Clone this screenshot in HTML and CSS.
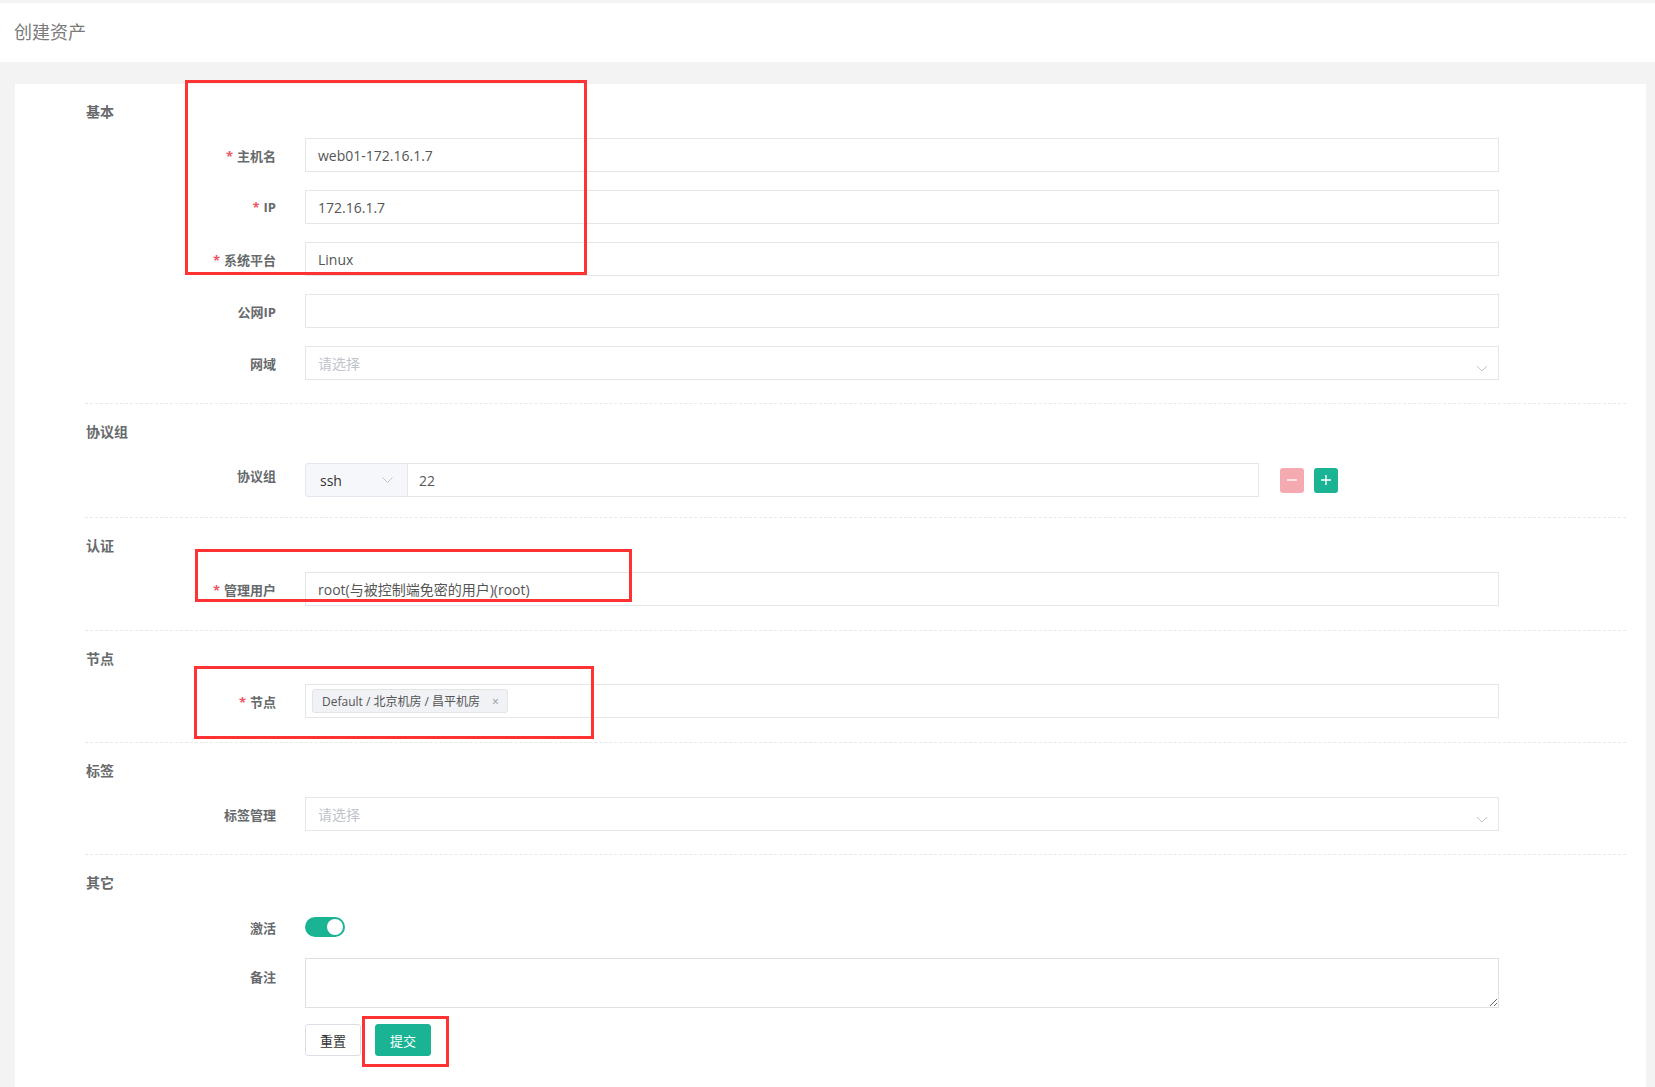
FILE: index.html
```html
<!DOCTYPE html>
<html lang="zh-CN">
<head>
<meta charset="utf-8">
<title>创建资产</title>
<link rel="stylesheet" href="styles.css">
</head>
<body>
<div class="page">
  <div class="topbar">创建资产</div>
  <div class="card">
    <div class="section">
      <div class="section-title">基本</div>
      <div class="row"><div class="label"><span class="req">*</span>主机名</div><div class="control">web01-172.16.1.7</div></div>
      <div class="row"><div class="label"><span class="req">*</span>IP</div><div class="control">172.16.1.7</div></div>
      <div class="row"><div class="label"><span class="req">*</span>系统平台</div><div class="control">Linux</div></div>
      <div class="row"><div class="label">公网IP</div><div class="control"></div></div>
      <div class="row"><div class="label">网域</div><div class="control select"><span class="placeholder">请选择</span><svg class="chev" width="12" height="7" viewBox="0 0 12 7"><path d="M1 1 L6 6 L11 1" fill="none" stroke="#c0c4cc" stroke-width="1"/></svg></div></div>
    </div>
    <div class="section s-proto">
      <div class="section-title">协议组</div>
      <div class="row">
        <div class="label label-top">协议组</div>
        <div class="proto">
          <div class="proto-select"><span>ssh</span><svg class="chev-s" width="11" height="6" viewBox="0 0 11 6"><path d="M0.5 0.5 L5.5 5.5 L10.5 0.5" fill="none" stroke="#c0c4cc" stroke-width="1"/></svg></div>
          <div class="proto-port">22</div>
        </div>
        <div class="btn-sq minus"><svg width="12" height="12" viewBox="0 0 12 12"><path d="M1 6 H11" stroke="#fff" stroke-width="1.4"/></svg></div>
        <div class="btn-sq plus"><svg width="12" height="12" viewBox="0 0 12 12"><path d="M1 6 H11 M6 1 V11" stroke="#fff" stroke-width="1.4"/></svg></div>
      </div>
    </div>
    <div class="section s-wide">
      <div class="section-title">认证</div>
      <div class="row"><div class="label"><span class="req">*</span>管理用户</div><div class="control">root(与被控制端免密的用户)(root)</div></div>
    </div>
    <div class="section s-wide s-node">
      <div class="section-title">节点</div>
      <div class="row"><div class="label"><span class="req">*</span>节点</div><div class="control tags"><span class="tag">Default / 北京机房 / 昌平机房<span class="tag-x">×</span></span></div></div>
    </div>
    <div class="section">
      <div class="section-title">标签</div>
      <div class="row"><div class="label">标签管理</div><div class="control select"><span class="placeholder">请选择</span><svg class="chev" width="12" height="7" viewBox="0 0 12 7"><path d="M1 1 L6 6 L11 1" fill="none" stroke="#c0c4cc" stroke-width="1"/></svg></div></div>
    </div>
    <div class="section last">
      <div class="section-title">其它</div>
      <div class="row r-switch"><div class="label">激活</div><div class="switch"><span class="knob"></span></div></div>
      <div class="row r-area"><div class="label">备注</div><textarea class="area"></textarea></div>
      <div class="actions"><button class="btn btn-reset">重置</button><button class="btn btn-submit">提交</button></div>
    </div>
  </div>
  <div class="mark m1"></div>
  <div class="mark m2"></div>
  <div class="mark m3"></div>
  <div class="mark m4"></div>
</div>
</body>
</html>
```
FILE: styles.css
```css
html, body {
  margin: 0;
  padding: 0;
}
body {
  background: #f3f3f4;
  font-family: "Open Sans", "Noto Sans CJK SC", sans-serif;
  color: #676a6c;
}
.page {
  position: relative;
  padding-top: 3px;
  min-height: 1084px;
}
.topbar {
  background: #fff;
  height: 59px;
  box-sizing: border-box;
  padding: 0 0 4px 14px;
  display: flex;
  align-items: center;
  font-size: 18px;
  color: #7a7a7a;
}
.card {
  background: #fff;
  margin: 22px 9px 0 15px;
  padding: 0 20px 40px 70px;
}
.section {
  padding-top: 18px;
  padding-bottom: 23px;
  border-bottom: 1px dashed #e7eaec;
}
.section.last {
  border-bottom: none;
}
.section.s-proto {
  padding-bottom: 20px;
}
.section.s-proto .section-title {
  margin-bottom: 21px;
}
.section.s-wide {
  padding-bottom: 24px;
}
.section.s-node .section-title {
  margin-bottom: 15px;
}
.section-title {
  font-size: 14px;
  font-weight: bold;
  line-height: 20px;
  margin: 0 0 16px 1px;
  color: #676a6c;
}
.row {
  display: flex;
  align-items: center;
  height: 34px;
  margin-bottom: 18px;
}
.row:last-child {
  margin-bottom: 0;
}
.label {
  flex: none;
  width: 191px;
  margin-right: 29px;
  text-align: right;
  font-size: 13px;
  font-weight: bold;
  color: #676a6c;
}
.label-top {
  align-self: flex-start;
  padding-top: 4px;
  line-height: 18px;
}
.req {
  color: #ed5565;
  margin-right: 4px;
}
.control {
  flex: none;
  width: 1194px;
  height: 34px;
  box-sizing: border-box;
  border: 1px solid #e5e6e7;
  padding: 0 12px;
  display: flex;
  align-items: center;
  font-size: 14px;
  color: #555;
}
.placeholder {
  color: #c0c4cc;
}
.chev {
  margin-left: auto;
  margin-right: -2px;
  margin-top: 10px;
}
.proto {
  flex: none;
  width: 954px;
  height: 34px;
  display: flex;
}
.proto-select {
  width: 102px;
  box-sizing: border-box;
  background: #f5f7fa;
  border: 1px solid #e4e7ed;
  border-right: none;
  border-radius: 4px 0 0 4px;
  display: flex;
  align-items: center;
  padding: 0 14px 0 14px;
  font-size: 14px;
  color: #333;
}
.chev-s {
  margin-left: auto;
}
.proto-port {
  flex: 1;
  box-sizing: border-box;
  border: 1px solid #e5e6e7;
  display: flex;
  align-items: center;
  padding: 0 11px;
  font-size: 14px;
  color: #555;
}
.btn-sq {
  flex: none;
  width: 24px;
  height: 25px;
  border-radius: 3px;
  display: flex;
  align-items: center;
  justify-content: center;
}
.minus {
  margin-left: 21px;
  background: #f5aab1;
}
.plus {
  margin-left: 10px;
  background: #1ab394;
}
.tags {
  padding-left: 6px;
}
.tag {
  display: inline-flex;
  align-items: center;
  height: 24px;
  box-sizing: border-box;
  padding: 0 8px 0 9px;
  background: #f0f2f5;
  border: 1px solid #e4e4e4;
  border-radius: 3px;
  font-size: 12px;
  color: #555;
}
.tag-x {
  margin-left: 12px;
  color: #909399;
  font-size: 12px;
}
.r-switch {
  margin-bottom: 14px;
}
.section.last .section-title {
  margin-bottom: 17px;
}
.switch {
  position: relative;
  width: 40px;
  height: 20px;
  border-radius: 10px;
  background: #1ab394;
}
.knob {
  position: absolute;
  top: 2px;
  right: 2px;
  width: 16px;
  height: 16px;
  border-radius: 50%;
  background: #fff;
}
.r-area {
  height: 50px;
  align-items: flex-start;
  margin-bottom: 16px;
}
.r-area .label {
  padding-top: 10px;
  line-height: 18px;
}
.area {
  width: 1194px;
  height: 50px;
  box-sizing: border-box;
  border: 1px solid #dfe0e6;
  margin: 0;
  padding: 6px 12px;
  font-family: inherit;
  font-size: 14px;
}
.actions {
  display: flex;
  gap: 14px;
  margin-left: 220px;
}
.btn {
  width: 56px;
  height: 32px;
  border-radius: 3px;
  font-family: "Open Sans", "Noto Sans CJK SC", sans-serif;
  font-size: 13px;
  padding: 0;
}
.btn-reset {
  background: #fff;
  border: 1px solid #dcdfe6;
  color: #333;
}
.btn-submit {
  background: #1ab394;
  border: 1px solid #1ab394;
  color: #fff;
}
.mark {
  position: absolute;
  box-sizing: border-box;
  border: 3px solid #f33;
  pointer-events: none;
}
.m1 { left: 185px; top: 80px; width: 402px; height: 195px; }
.m2 { left: 195px; top: 549px; width: 437px; height: 53px; }
.m3 { left: 194px; top: 666px; width: 400px; height: 73px; }
.m4 { left: 362px; top: 1016px; width: 87px; height: 51px; }
```
